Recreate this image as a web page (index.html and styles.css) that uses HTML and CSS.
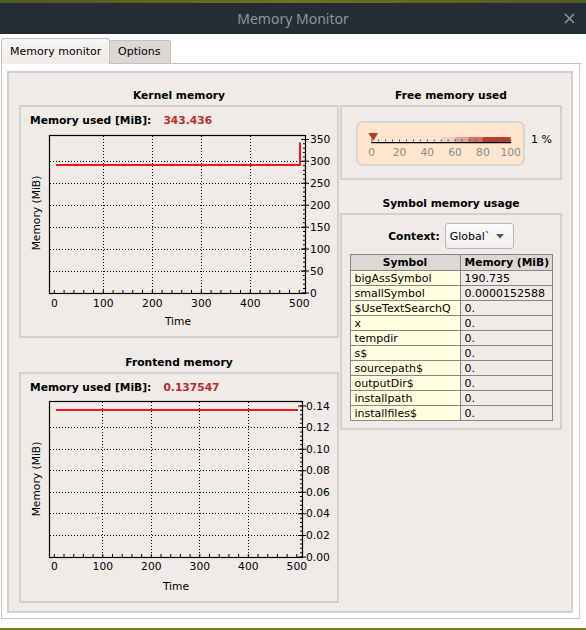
FILE: index.html
```html
<!DOCTYPE html>
<html>
<head>
<meta charset="utf-8">
<title>Memory Monitor</title>
<link rel="stylesheet" href="styles.css">
</head>
<body>
<div class="topstrip"></div>
<div class="titlebar">
  <span class="title">Memory Monitor</span>
  <svg class="close" width="11" height="11" viewBox="0 0 11 11"><path d="M1 1L10 10M10 1L1 10" stroke="#8e959a" stroke-width="1.6" fill="none"/></svg>
</div>
<div class="tabs">
  <div class="tab active">Memory monitor</div>
  <div class="tab">Options</div>
  <div class="tabfill"></div>
</div>
<div class="pane">
  <div class="frame">
    <div class="col leftcol">
      <div class="gtitle">Kernel memory</div>
      <div class="group chartgroup kernel">
        <div class="used"><span class="lbl">Memory used [MiB]:</span><span class="val">343.436</span></div>
        <svg class="chart" width="316" height="205" viewBox="0 0 316 205">
          <g stroke="#000" stroke-width="1" stroke-dasharray="1 2" fill="none">
            <line x1="82.5" y1="6" x2="82.5" y2="163"/>
            <line x1="131.5" y1="6" x2="131.5" y2="163"/>
            <line x1="180.5" y1="6" x2="180.5" y2="163"/>
            <line x1="229.5" y1="6" x2="229.5" y2="163"/>
            <line x1="29" y1="31.5" x2="284" y2="31.5"/>
            <line x1="29" y1="53.5" x2="284" y2="53.5"/>
            <line x1="29" y1="75.5" x2="284" y2="75.5"/>
            <line x1="29" y1="97.5" x2="284" y2="97.5"/>
            <line x1="29" y1="119.5" x2="284" y2="119.5"/>
            <line x1="29" y1="141.5" x2="284" y2="141.5"/>
          </g>
          <line x1="32.8" y1="161.5" x2="279" y2="161.5" stroke="#000" stroke-width="3" stroke-dasharray="1 8.8"/>
          <line x1="283" y1="163.5" x2="283" y2="6" stroke="#000" stroke-width="2" stroke-dasharray="1 3.388"/>
          <line x1="284" y1="163.5" x2="284" y2="6" stroke="#000" stroke-width="8" stroke-dasharray="1 20.94"/>
          <rect x="28.5" y="5.5" width="256" height="158" fill="none" stroke="#000" stroke-width="1.2"/>
          <polyline points="35,35 279,35 279,12.5" fill="none" stroke="#f0181c" stroke-width="2"/>
          <g class="ax" dominant-baseline="central">
            <text x="289" y="163">0</text>
            <text x="289" y="141">50</text>
            <text x="289" y="119">100</text>
            <text x="289" y="97">150</text>
            <text x="289" y="75">200</text>
            <text x="289" y="53">250</text>
            <text x="289" y="31">300</text>
            <text x="289" y="9.5">350</text>
          </g>
          <g class="ax" text-anchor="middle" dominant-baseline="central">
            <text x="33.3" y="173">0</text>
            <text x="82.3" y="173">100</text>
            <text x="131.3" y="173">200</text>
            <text x="180.3" y="173">300</text>
            <text x="229.3" y="173">400</text>
            <text x="278.3" y="173">500</text>
            <text x="157" y="191">Time</text>
            <text transform="translate(15.7 83) rotate(-90)">Memory (MiB)</text>
          </g>
        </svg>
      </div>
      <div class="gtitle second">Frontend memory</div>
      <div class="group chartgroup frontend">
        <div class="used"><span class="lbl">Memory used [MiB]:</span><span class="val">0.137547</span></div>
        <svg class="chart" width="316" height="202" viewBox="0 0 316 202">
          <g stroke="#000" stroke-width="1" stroke-dasharray="1 2" fill="none">
            <line x1="81.5" y1="5" x2="81.5" y2="160"/>
            <line x1="130.5" y1="5" x2="130.5" y2="160"/>
            <line x1="178.5" y1="5" x2="178.5" y2="160"/>
            <line x1="227.5" y1="5" x2="227.5" y2="160"/>
            <line x1="29" y1="30.5" x2="281" y2="30.5"/>
            <line x1="29" y1="52.5" x2="281" y2="52.5"/>
            <line x1="29" y1="73.5" x2="281" y2="73.5"/>
            <line x1="29" y1="95.5" x2="281" y2="95.5"/>
            <line x1="29" y1="116.5" x2="281" y2="116.5"/>
            <line x1="29" y1="138.5" x2="281" y2="138.5"/>
          </g>
          <line x1="32.8" y1="158.5" x2="277" y2="158.5" stroke="#000" stroke-width="3" stroke-dasharray="1 8.7"/>
          <line x1="280" y1="160.5" x2="280" y2="5" stroke="#000" stroke-width="2" stroke-dasharray="1 3.314"/>
          <line x1="281" y1="160.5" x2="281" y2="5" stroke="#000" stroke-width="8" stroke-dasharray="1 20.57"/>
          <rect x="28.5" y="4.5" width="253" height="156" fill="none" stroke="#000" stroke-width="1.2"/>
          <polyline points="35,13 277,13" fill="none" stroke="#f0181c" stroke-width="2"/>
          <g class="ax" dominant-baseline="central">
            <text x="285" y="160">0.00</text>
            <text x="285" y="138.4">0.02</text>
            <text x="285" y="116.9">0.04</text>
            <text x="285" y="95.3">0.06</text>
            <text x="285" y="73.7">0.08</text>
            <text x="285" y="52.2">0.10</text>
            <text x="285" y="30.6">0.12</text>
            <text x="285" y="9">0.14</text>
          </g>
          <g class="ax" text-anchor="middle" dominant-baseline="central">
            <text x="33.3" y="169.5">0</text>
            <text x="81.8" y="169.5">100</text>
            <text x="130.3" y="169.5">200</text>
            <text x="178.8" y="169.5">300</text>
            <text x="227.3" y="169.5">400</text>
            <text x="275.8" y="169.5">500</text>
            <text x="155" y="189">Time</text>
            <text transform="translate(15.7 82) rotate(-90)">Memory (MiB)</text>
          </g>
        </svg>
      </div>
    </div>
    <div class="col rightcol">
      <div class="gtitle">Free memory used</div>
      <div class="group freegroup">
        <div class="gauge">
          <svg width="165" height="41" viewBox="0 0 165 41">
            <rect x="83.2" y="14" width="13.9" height="5" fill="#efcdc8"/>
            <rect x="97.1" y="14" width="13.9" height="5" fill="#dfa39b"/>
            <rect x="111" y="14" width="13.9" height="5" fill="#cf7367"/>
            <rect x="124.9" y="14" width="27.8" height="5" fill="#b93f31"/>
            <line x1="13.2" y1="17.5" x2="153.5" y2="17.5" stroke="#555" stroke-width="2" stroke-dasharray="1 5.95"/>
            <line x1="13.2" y1="19.6" x2="153.2" y2="19.6" stroke="#000" stroke-width="1.3"/>
            <polygon points="10.5,10 20,10 15.25,18" fill="#b3392b"/>
            <g class="gl" text-anchor="middle" dominant-baseline="central">
              <text x="13.7" y="29">0</text>
              <text x="41.5" y="29">20</text>
              <text x="69.3" y="29">40</text>
              <text x="97.1" y="29">60</text>
              <text x="124.9" y="29">80</text>
              <text x="152.7" y="29">100</text>
            </g>
          </svg>
        </div>
        <div class="pct">1 %</div>
      </div>
      <div class="gtitle second2">Symbol memory usage</div>
      <div class="group symgroup">
        <div class="ctx">
          <span class="ctxlbl">Context:</span>
          <div class="combo"><span>Global`</span><svg width="8" height="5" viewBox="0 0 8 5"><polygon points="0,0 8,0 4,4.5" fill="#555"/></svg></div>
        </div>
        <table class="symtable">
          <colgroup><col class="c1"><col class="c2"></colgroup>
          <thead><tr><th>Symbol</th><th>Memory (MiB)</th></tr></thead>
          <tbody>
            <tr><td>bigAssSymbol</td><td>190.735</td></tr>
            <tr><td>smallSymbol</td><td>0.0000152588</td></tr>
            <tr><td>$UseTextSearchQ</td><td>0.</td></tr>
            <tr><td>x</td><td>0.</td></tr>
            <tr><td>tempdir</td><td>0.</td></tr>
            <tr><td>s$</td><td>0.</td></tr>
            <tr><td>sourcepath$</td><td>0.</td></tr>
            <tr><td>outputDir$</td><td>0.</td></tr>
            <tr><td>installpath</td><td>0.</td></tr>
            <tr><td>installfiles$</td><td>0.</td></tr>
          </tbody>
        </table>
      </div>
    </div>
  </div>
</div>
<div class="bottomstrip"></div>
</body>
</html>
```

FILE: styles.css
```css
* { box-sizing: border-box; margin: 0; padding: 0; }
html, body { width: 586px; height: 630px; overflow: hidden; }
body {
  background: #fff;
  font-family: "DejaVu Sans", sans-serif;
  font-size: 11px;
  color: #000;
}
.topstrip { height: 3px; background: linear-gradient(90deg, #4d5a1e, #6b7325 50%, #4f5c20); }
.titlebar {
  height: 31px;
  background: #232d33;
  display: grid;
  grid-template-columns: 1fr auto 1fr;
  align-items: center;
}
.title {
  grid-column: 2;
  font-family: "Noto Sans", sans-serif;
  font-size: 14px;
  color: #8e959a;
}
.close { grid-column: 3; justify-self: end; margin-right: 11px; display: block; }

.tabs {
  display: flex;
  align-items: flex-end;
  height: 30px;
  padding-left: 1px;
  padding-right: 5px;
}
.tab {
  line-height: 14px;
  border: 1px solid #c5c1bc;
  padding-left: 8px;
}
.tab.active {
  width: 109px;
  height: 26px;
  padding-top: 6px;
  border-bottom: none;
  border-radius: 3px 3px 0 0;
  background: linear-gradient(#f6f5f3, #efebe7);
}
.tab:not(.active) {
  width: 61px;
  height: 24px;
  padding-top: 4px;
  border-left: none;
  border-radius: 0 3px 0 0;
  background: #dcd8d3;
}
.tabfill { flex: 1; height: 1px; background: #c5c1bc; }

.pane {
  margin-left: 1px;
  width: 579px;
  height: 555px;
  border: 1px solid #cbc7c2;
  border-top: none;
  padding: 7px 0 0 5px;
}
.frame {
  width: 566px;
  height: 542px;
  border: 2px solid #d4d0cb;
  background: #efebe7;
  display: flex;
  gap: 1px;
  padding: 14px 0 0 10px;
}
.leftcol { width: 320px; }
.rightcol { width: 222px; }
.gtitle {
  height: 18px;
  line-height: 18px;
  text-align: center;
  font-weight: bold;
  font-size: 10.7px;
}
.gtitle.second { margin-top: 16px; }
.gtitle.second2 { margin-top: 15px; }
.group { border: 2px solid #d4d0cb; }
.kernel { height: 233px; }
.frontend { height: 231px; }
.used {
  display: flex;
  margin: 7px 0 0 9px;
  line-height: 14px;
  font-weight: bold;
  font-size: 10.7px;
}
.used .val { margin-left: 12px; color: #bd2a2e; }
.chart { display: block; margin-top: 2px; }
.ax text { font-family: "DejaVu Sans", sans-serif; font-size: 10.7px; fill: #000; }

.freegroup {
  height: 75px;
  display: flex;
  align-items: flex-start;
  padding-left: 14px;
}
.gauge {
  margin-top: 14px;
  width: 169px;
  height: 45px;
  border: 2px solid #d9d5d0;
  border-radius: 7px;
  background: #fde5cf;
}
.gauge svg { display: block; }
.gl text { font-family: "DejaVu Sans", sans-serif; font-size: 10.7px; fill: #8a8a8a; }
.pct { margin: 26px 0 0 6px; line-height: 14px; }

.symgroup {
  height: 217px;
  display: flex;
  flex-direction: column;
  align-items: center;
}
.ctx {
  margin-top: 8px;
  display: flex;
  align-items: center;
  gap: 5px;
}
.ctxlbl { font-weight: bold; font-size: 10.7px; }
.combo {
  width: 69px;
  height: 26px;
  border: 1px solid #bbb7b2;
  border-radius: 3px;
  background: linear-gradient(#fafaf9, #f1efed);
  display: flex;
  align-items: center;
  justify-content: space-between;
  padding: 0 9px 0 4px;
}
.combo svg { display: block; }
.symtable {
  margin-top: 5px;
  width: 202px;
  border-collapse: collapse;
  table-layout: fixed;
}
.symtable col.c1 { width: 110px; }
.symtable col.c2 { width: 92px; }
.symtable th, .symtable td {
  border: 1px solid #868686;
  text-align: left;
  white-space: nowrap;
  overflow: hidden;
  padding: 0 4px;
}
.symtable th {
  height: 16px;
  line-height: 14px;
  background: #dcd8d3;
  text-align: center;
  font-weight: bold;
  font-size: 10.7px;
}
.symtable td { height: 15px; line-height: 13px; }
.symtable td:first-child { background: #ffffe0; }
.symtable td:last-child { background: #efebe7; }

.bottomstrip { margin-top: 9px; height: 2px; background: #7a7d24; }
```
